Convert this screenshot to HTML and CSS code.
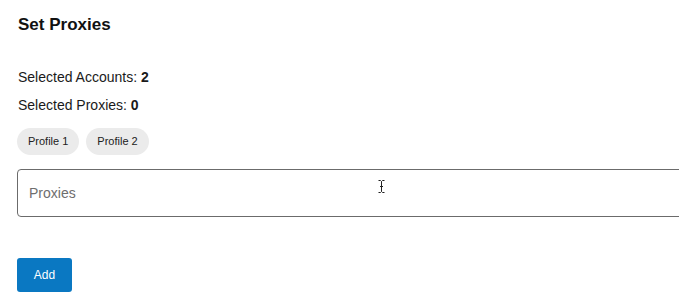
FILE: index.html
```html
<!DOCTYPE html>
<html lang="en">
<head>
<meta charset="utf-8">
<title>Set Proxies</title>
<link rel="stylesheet" href="styles.css">
</head>
<body>
<main class="panel">
  <h2 class="title">Set Proxies</h2>
  <p class="stat stat-first">Selected Accounts: <b>2</b></p>
  <p class="stat stat-second">Selected Proxies: <b>0</b></p>
  <div class="chips">
    <span class="chip">Profile 1</span>
    <span class="chip">Profile 2</span>
  </div>
  <div class="field">
    <input class="input" type="text" placeholder="Proxies">
    <svg class="cursor" width="7" height="13" viewBox="0 0 7 13" aria-hidden="true">
      <path d="M0.5 0.5 L2.5 0.5 L3.5 1.5 L4.5 0.5 L6.5 0.5 M3.5 1.5 L3.5 11.5 M2 6.5 L5 6.5 M0.5 12.5 L2.5 12.5 L3.5 11.5 L4.5 12.5 L6.5 12.5" fill="none" stroke="#222" stroke-width="1"/>
    </svg>
  </div>
  <button class="btn" type="button">Add</button>
</main>
</body>
</html>
```
FILE: styles.css
```css
html {
  overflow: hidden;
}
body {
  margin: 0;
  background: #ffffff;
  font-family: "Liberation Sans", Arial, sans-serif;
  color: #1a1a1a;
}
.panel {
  display: flex;
  flex-direction: column;
  align-items: flex-start;
  padding: 15px 0 0 17px;
  width: 720px;
}
.title {
  margin: 0;
  font-size: 17px;
  line-height: 20px;
  font-weight: bold;
  color: #111;
  padding-left: 1px;
}
.stat {
  margin: 0;
  font-size: 14px;
  line-height: 20px;
  color: #1a1a1a;
  padding-left: 1px;
}
.stat b {
  font-weight: bold;
}
.stat-first {
  margin-top: 32px;
}
.stat-second {
  margin-top: 7.5px;
}
.chips {
  display: flex;
  gap: 7px;
  margin-top: 13px;
}
.chip {
  display: inline-flex;
  align-items: center;
  height: 27px;
  padding: 0 11px;
  border-radius: 14px;
  background: #ebebeb;
  font-size: 11px;
  color: #222;
}
.field {
  position: relative;
  margin-top: 14px;
}
.input {
  display: block;
  box-sizing: border-box;
  width: 700px;
  height: 48px;
  margin: 0;
  padding: 0 11px;
  border: 1px solid #6b6b6b;
  border-radius: 4px;
  font-family: "Liberation Sans", Arial, sans-serif;
  font-size: 14px;
  color: #222;
  background: #fff;
  outline: none;
}
.input::placeholder {
  color: #6e6e6e;
}
.cursor {
  position: absolute;
  left: 361px;
  top: 11px;
}
.btn {
  margin-top: 41px;
  height: 34px;
  width: 55px;
  padding: 0;
  border: none;
  border-radius: 3px;
  background: #0a78c2;
  color: #fff;
  font-family: "Liberation Sans", Arial, sans-serif;
  font-size: 12px;
  cursor: pointer;
}
```
